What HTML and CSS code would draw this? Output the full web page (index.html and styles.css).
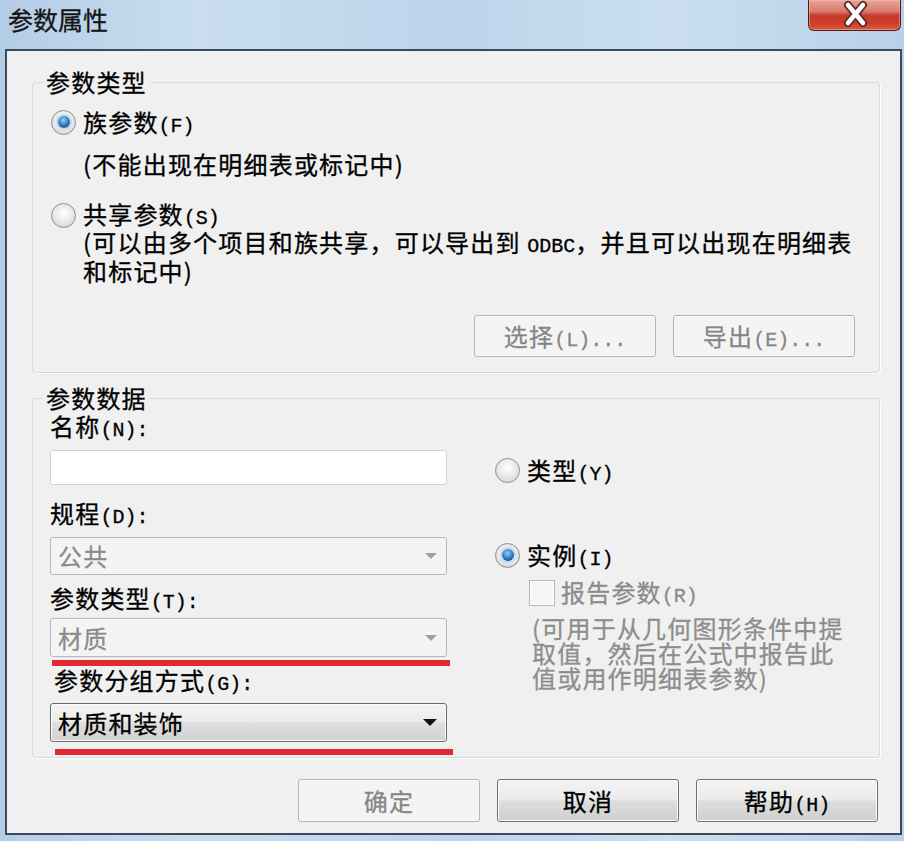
FILE: index.html
```html
<!DOCTYPE html>
<html lang="zh-CN">
<head>
    <meta charset="UTF-8">
    <meta name="viewport" content="width=device-width, initial-scale=1.0">
    <title>参数属性</title>
    <link rel="stylesheet" href="styles.css">
</head>
<body>
    <div class="window">
        <div class="titlebar">
            <span class="title">参数属性</span>
            <div class="close">
                <svg width="93" height="30" viewBox="0 0 93 30">
                    <path d="M39 5 L54 23 M54 5 L39 23" stroke="#5b2a24" stroke-width="8" stroke-linecap="round" fill="none"/>
                    <path d="M39 5 L54 23 M54 5 L39 23" stroke="#ffffff" stroke-width="4.5" stroke-linecap="round" fill="none"/>
                </svg>
            </div>
        </div>

        <div class="client">
            <fieldset class="group">
                <legend>参数类型</legend>
                <div class="type-body">
                    <div class="option">
                        <span class="radio checked"></span>
                        <span>族参数<span class="key">(F)</span></span>
                    </div>
                    <p class="note note-family">(不能出现在明细表或标记中)</p>

                    <div class="option option-shared">
                        <span class="radio"></span>
                        <span>共享参数<span class="key">(S)</span></span>
                    </div>
                    <p class="note">(可以由多个项目和族共享，可以导出到 <span class="key">ODBC</span>，并且可以出现在明细表<br>和标记中)</p>

                    <div class="group-actions">
                        <button class="btn" disabled>选择<span class="key">(L)...</span></button>
                        <button class="btn" disabled>导出<span class="key">(E)...</span></button>
                    </div>
                </div>
            </fieldset>

            <fieldset class="group group-data">
                <legend>参数数据</legend>
                <div class="data-body">
                    <div class="data-left">
                        <label class="label">名称<span class="key">(N):</span></label>
                        <div class="field"></div>

                        <label class="label label-gap">规程<span class="key">(D):</span></label>
                        <div class="combo">
                            <span>公共</span>
                            <span class="arrow"></span>
                        </div>

                        <label class="label label-type">参数类型<span class="key">(T):</span></label>
                        <div class="combo combo-tight">
                            <span>材质</span>
                            <span class="arrow"></span>
                        </div>
                        <div class="mark mark-first"></div>

                        <label class="label label-group">参数分组方式<span class="key">(G):</span></label>
                        <div class="combo active">
                            <span>材质和装饰</span>
                            <span class="arrow"></span>
                        </div>
                        <div class="mark mark-second"></div>
                    </div>

                    <div class="data-right">
                        <div class="option option-kind">
                            <span class="radio"></span>
                            <span>类型<span class="key">(Y)</span></span>
                        </div>
                        <div class="option option-instance">
                            <span class="radio checked"></span>
                            <span>实例<span class="key">(I)</span></span>
                        </div>
                        <div class="check-row">
                            <span class="checkbox"></span>
                            <span>报告参数<span class="key">(R)</span></span>
                        </div>
                        <p class="desc">(可用于从几何图形条件中提<br>取值，然后在公式中报告此<br>值或用作明细表参数)</p>
                    </div>
                </div>
            </fieldset>

            <div class="dialog-actions">
                <button class="btn" disabled>确定</button>
                <button class="btn">取消</button>
                <button class="btn">帮助<span class="key">(H)</span></button>
            </div>
        </div>
    </div>
</body>
</html>
```

FILE: styles.css
```css
*{
    margin: 0;
    padding: 0;
    box-sizing: border-box;
}
body{
    width: 904px;
    height: 841px;
    overflow: hidden;
    background-color: #bdd5ea;
    font-family: "Noto Sans CJK SC", "Liberation Sans", sans-serif;
    font-size: 24px;
    letter-spacing: 1.2px;
    color: #000000;
    -webkit-text-stroke: 0.3px currentColor;
}
.window{
    width: 904px;
    height: 841px;
    background: linear-gradient(90deg, #b4cde6 0%, #c9ddef 22%, #bcd4eb 50%, #cadef0 74%, #b8d0e8 100%);
}
.titlebar{
    height: 49px;
    display: flex;
    justify-content: space-between;
    align-items: flex-start;
}
.title{
    padding-left: 8px;
    font-size: 25px;
    letter-spacing: 0;
    line-height: 38px;
    color: #141414;
}
.close{
    width: 93px;
    height: 31px;
    margin-right: 3px;
    border: 1px solid #4b1d17;
    border-top: none;
    border-radius: 0 0 6px 6px;
    background: linear-gradient(#e6a698, #d97a6c 38%, #c53b2b 52%, #cf3d2c 78%, #de5a45);
    box-shadow: inset 0 0 0 1px rgba(255, 200, 190, 0.45);
}
.close svg{
    display: block;
}
.client{
    margin-left: 5px;
    width: 897px;
    height: 786px;
    background-color: #f0f0f0;
    border: 2px solid #3d4a5b;
    padding: 16px 20px 0 25px;
}
.key{
    font-family: "Liberation Mono", monospace;
    font-size: 20px;
    letter-spacing: 0;
    line-height: 1;
}

/* group boxes */
.group{
    border: 1px solid #d3dbe1;
    border-radius: 4px;
    box-shadow: 1px 1px 0 #ffffff;
}
.group legend{
    margin-left: 10px;
    padding: 0 3px;
    line-height: 30px;
}
.group-data{
    margin-top: 10px;
}
.type-body{
    padding: 10px 24px 15px 18px;
}
.option{
    display: flex;
    align-items: center;
    gap: 7px;
    height: 30px;
    line-height: 30px;
}
.option-shared{
    margin-top: 25px;
    height: 26px;
    line-height: 26px;
}
.note{
    margin-left: 32px;
    line-height: 27px;
}
.note-family{
    margin-top: 13px;
}
.group-actions{
    margin-top: 31px;
    display: flex;
    justify-content: flex-end;
    gap: 17px;
}

/* radio + checkbox */
.radio{
    flex: none;
    width: 25px;
    height: 25px;
    border-radius: 50%;
    border: 1px solid #8e8f8f;
    background: radial-gradient(circle at 50% 40%, #ffffff, #e6e6e6 55%, #cccccc);
    display: flex;
    align-items: center;
    justify-content: center;
}
.radio.checked::after{
    content: "";
    width: 12px;
    height: 12px;
    border-radius: 50%;
    background: radial-gradient(circle at 45% 35%, #8fd0f5, #2b72b8 55%, #123e70);
    box-shadow: 0 0 0 2px #c0dcf2;
}
.checkbox{
    flex: none;
    width: 26px;
    height: 26px;
    border: 1px solid #b7b7b7;
    background-color: #f6f6f6;
    box-shadow: inset 0 0 0 1px #ffffff;
}

/* parameter data */
.data-body{
    display: flex;
    gap: 48px;
    padding: 2px 0 2px 17px;
}
.data-left{
    width: 397px;
    display: flex;
    flex-direction: column;
}
.label{
    height: 30px;
    line-height: 22px;
    padding-bottom: 8px;
}
.label-gap{
    margin-top: 17px;
}
.label-type{
    margin-top: 12px;
}
.label-group{
    margin-top: 3px;
    padding-left: 4px;
}
.field{
    margin-top: 5px;
    height: 35px;
    background-color: #ffffff;
    border: 1px solid #cfd3d7;
    border-radius: 3px;
}
.combo{
    margin-top: 5px;
    height: 38px;
    display: flex;
    align-items: center;
    justify-content: space-between;
    padding: 0 9px 0 7px;
    border: 1px solid #b5b9bc;
    border-radius: 3px;
    background-color: #f4f4f4;
    color: #8b8b8b;
    line-height: 30px;
}
.combo-tight{
    margin-top: 1px;
    height: 39px;
}
.combo.active{
    margin-top: 4px;
    height: 39px;
    border-color: #6c6c6c;
    background: linear-gradient(#f4f4f4, #ececec 45%, #dedede 52%, #d3d3d3);
    box-shadow: inset 0 0 0 1px #fbfbfb;
    color: #000000;
}
.arrow{
    width: 0;
    height: 0;
    border-left: 6px solid transparent;
    border-right: 6px solid transparent;
    border-top: 6px solid #a0a0a0;
}
.combo.active .arrow{
    border-left-width: 7px;
    border-right-width: 7px;
    border-top: 7px solid #111111;
}
.mark{
    width: 398px;
    height: 6px;
    flex: none;
    background-color: #df2a33;
}
.mark-first{
    margin: 3px 0 0 2px;
}
.mark-second{
    margin: 7px 0 0 5px;
}
.data-right{
    display: flex;
    flex-direction: column;
}
.option-kind{
    margin-top: 40px;
}
.option-instance{
    margin-top: 55px;
}
.check-row{
    margin: 10px 0 0 34px;
    display: flex;
    align-items: center;
    gap: 6px;
    height: 26px;
    line-height: 26px;
    color: #8b8b8b;
}
.desc{
    margin: 9px 0 0 37px;
    line-height: 25px;
    color: #8d8d8d;
}

/* buttons */
.btn{
    width: 182px;
    height: 42px;
    font-family: inherit;
    font-size: 24px;
    letter-spacing: 1.2px;
    line-height: 30px;
    color: #000000;
    border: 1px solid #707070;
    border-radius: 3px;
    background: linear-gradient(#f3f3f3, #ebebeb 48%, #dddddd 52%, #cfcfcf);
    box-shadow: inset 0 0 0 1px #fbfbfb;
}
.btn:disabled{
    border-color: #adb2b5;
    background: #f4f4f4;
    color: #868686;
}
.dialog-actions{
    margin: 21px 2px 0 0;
    display: flex;
    justify-content: flex-end;
    gap: 17px;
}
.dialog-actions .btn{
    height: 43px;
}
```
